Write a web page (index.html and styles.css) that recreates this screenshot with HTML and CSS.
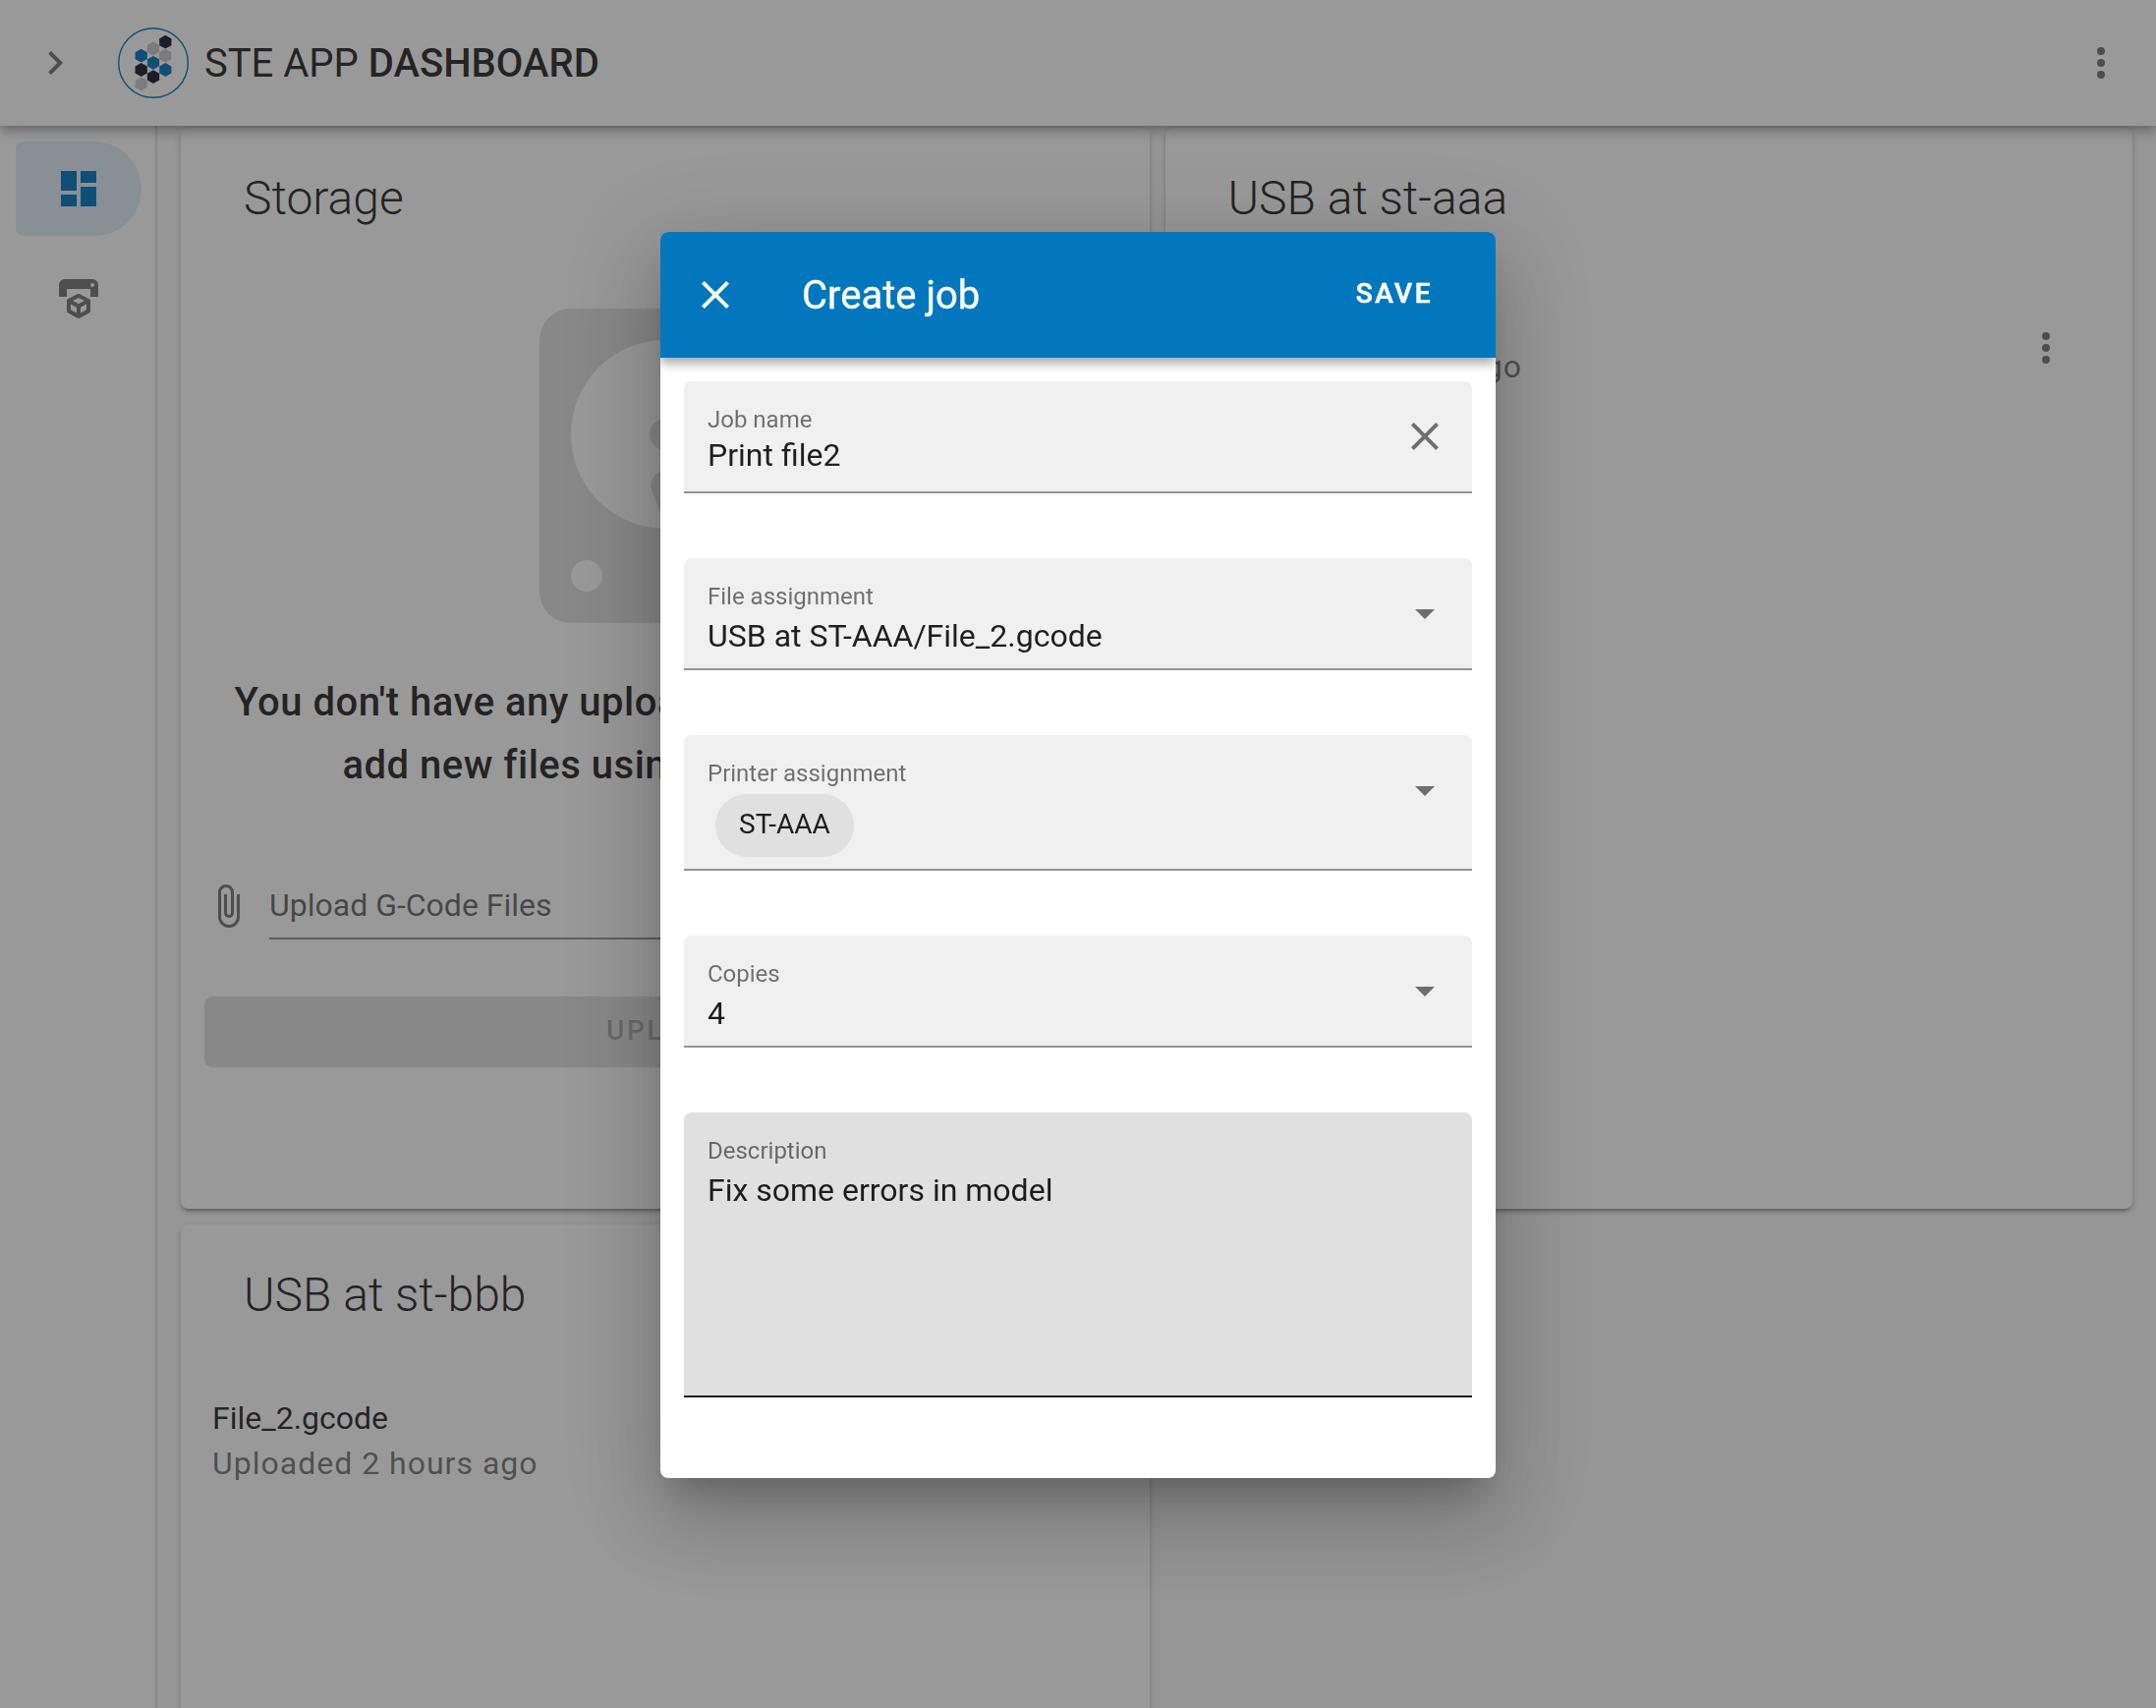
FILE: index.html
```html
<!DOCTYPE html>
<html lang="en">
<head>
<meta charset="utf-8">
<title>STE App Dashboard</title>
<link rel="stylesheet" href="styles.css">
</head>
<body>
<div class="app">
  <header class="app-bar">
    <svg class="icon" viewBox="0 0 24 24"><path d="M8.59,16.58L13.17,12L8.59,7.41L10,6L16,12L10,18L8.59,16.58Z"/></svg>
    <svg class="logo" viewBox="0 0 72 72">
      <defs><path id="hex" d="M0,-6.9L6.1,-3.45V3.45L0,6.9L-6.1,3.45V-3.45Z"/></defs>
      <circle cx="36" cy="36" r="35.3" fill="none" stroke="#0277bd" stroke-width="1.4"/>
      <use href="#hex" x="48.3" y="14.7" fill="#1b1833"/>
      <use href="#hex" x="36" y="21.5" fill="#c8c8c8"/>
      <use href="#hex" x="48.3" y="28.7" fill="#c8c8c8"/>
      <use href="#hex" x="23.7" y="28.7" fill="#0277bd"/>
      <use href="#hex" x="36" y="35.8" fill="#0277bd"/>
      <use href="#hex" x="23.7" y="43" fill="#1b1833"/>
      <use href="#hex" x="48.3" y="43" fill="#0277bd"/>
      <use href="#hex" x="36" y="50.1" fill="#1b1833"/>
      <use href="#hex" x="23.7" y="57.3" fill="#c8c8c8"/>
    </svg>
    <h1 class="app-title">STE APP <b>DASHBOARD</b></h1>
    <svg class="icon app-menu" viewBox="0 0 24 24"><path d="M12,16A2,2 0 0,1 14,18A2,2 0 0,1 12,20A2,2 0 0,1 10,18A2,2 0 0,1 12,16M12,10A2,2 0 0,1 14,12A2,2 0 0,1 12,14A2,2 0 0,1 10,12A2,2 0 0,1 12,10M12,4A2,2 0 0,1 14,6A2,2 0 0,1 12,8A2,2 0 0,1 10,6A2,2 0 0,1 12,4Z"/></svg>
  </header>
  <div class="body">
    <nav class="nav">
      <a class="nav-item active"><svg class="icon" viewBox="0 0 24 24"><path d="M13,3V9H21V3M13,21H21V11H13M3,21H11V15H3M3,13H11V3H3V13Z"/></svg></a>
      <a class="nav-item"><svg class="icon" viewBox="0 0 24 24"><path d="M19,6A1,1 0 0,0 20,5A1,1 0 0,0 19,4A1,1 0 0,0 18,5A1,1 0 0,0 19,6M19,2A3,3 0 0,1 22,5V11H18V7H6V11H2V5A3,3 0 0,1 5,2H19M18,18.25C18,18.63 17.79,18.96 17.47,19.13L12.57,21.82C12.4,21.94 12.21,22 12,22C11.79,22 11.59,21.94 11.43,21.82L6.53,19.13C6.21,18.96 6,18.63 6,18.25V13C6,12.62 6.21,12.29 6.53,12.12L11.43,9.68C11.59,9.56 11.79,9.5 12,9.5C12.21,9.5 12.4,9.56 12.57,9.68L17.47,12.12C17.79,12.29 18,12.62 18,13V18.25M12,11.65L9.04,13L12,14.6L14.96,13L12,11.65M8,17.66L11,19.29V16.33L8,14.71V17.66M16,17.66V14.71L13,16.33V19.29L16,17.66Z"/></svg></a>
    </nav>
    <main class="grid">
      <section class="card">
        <h2 class="card-title">Storage</h2>
        <svg class="disk" viewBox="0 0 24 24"><path d="M6,2H18A2,2 0 0,1 20,4V20A2,2 0 0,1 18,22H6A2,2 0 0,1 4,20V4A2,2 0 0,1 6,2M12,4A6,6 0 0,0 6,10C6,13.31 8.69,16 12.1,16L11.22,13.77C10.95,13.29 11.11,12.68 11.59,12.4L12.45,11.9C12.93,11.63 13.54,11.79 13.82,12.27L15.74,14.69C17.12,13.59 18,11.9 18,10A6,6 0 0,0 12,4M12,9A1,1 0 0,1 13,10A1,1 0 0,1 12,11A1,1 0 0,1 11,10A1,1 0 0,1 12,9M7,18A1,1 0 0,0 6,19A1,1 0 0,0 7,20A1,1 0 0,0 8,19A1,1 0 0,0 7,18M12.09,13.27L14.58,19.58L17.17,18.08L12.95,12.77L12.09,13.27Z"/></svg>
        <p class="empty">You don't have any uploaded files here. You can<br>add new files using the form below.</p>
        <div class="upload">
          <svg class="icon" viewBox="0 0 24 24"><path d="M16.5,6V17.5A4,4 0 0,1 12.5,21.5A4,4 0 0,1 8.5,17.5V5A2.5,2.5 0 0,1 11,2.5A2.5,2.5 0 0,1 13.5,5V15.5A1,1 0 0,1 12.5,16.5A1,1 0 0,1 11.5,15.5V6H10V15.5A2.5,2.5 0 0,0 12.5,18A2.5,2.5 0 0,0 15,15.5V5A4,4 0 0,0 11,1A4,4 0 0,0 7,5V17.5A5.5,5.5 0 0,0 12.5,23A5.5,5.5 0 0,0 18,17.5V6H16.5Z"/></svg>
          <div class="upload-input">Upload G-Code Files</div>
        </div>
        <div class="upload-button">UPLOAD</div>
      </section>
      <section class="card">
        <h2 class="card-title">USB at st-aaa</h2>
        <div class="file">
          <div class="file-text"><div>File_2.gcode</div><div class="file-date">Uploaded 2 hours ago</div></div>
          <svg class="icon" viewBox="0 0 24 24"><path d="M12,16A2,2 0 0,1 14,18A2,2 0 0,1 12,20A2,2 0 0,1 10,18A2,2 0 0,1 12,16M12,10A2,2 0 0,1 14,12A2,2 0 0,1 12,14A2,2 0 0,1 10,12A2,2 0 0,1 12,10M12,4A2,2 0 0,1 14,6A2,2 0 0,1 12,8A2,2 0 0,1 10,6A2,2 0 0,1 12,4Z"/></svg>
        </div>
      </section>
      <section class="card">
        <h2 class="card-title">USB at st-bbb</h2>
        <div class="file">
          <div class="file-text"><div>File_2.gcode</div><div class="file-date">Uploaded 2 hours ago</div></div>
          <svg class="icon" viewBox="0 0 24 24"><path d="M12,16A2,2 0 0,1 14,18A2,2 0 0,1 12,20A2,2 0 0,1 10,18A2,2 0 0,1 12,16M12,10A2,2 0 0,1 14,12A2,2 0 0,1 12,14A2,2 0 0,1 10,12A2,2 0 0,1 12,10M12,4A2,2 0 0,1 14,6A2,2 0 0,1 12,8A2,2 0 0,1 10,6A2,2 0 0,1 12,4Z"/></svg>
        </div>
      </section>
    </main>
  </div>
</div>
<div class="overlay">
  <div class="dialog">
    <div class="dialog-bar">
      <svg class="icon" viewBox="0 0 24 24"><path d="M19,6.41L17.59,5L12,10.59L6.41,5L5,6.41L10.59,12L5,17.59L6.41,19L12,13.41L17.59,19L19,17.59L13.41,12L19,6.41Z"/></svg>
      <h2 class="dialog-title">Create job</h2>
      <div class="save">SAVE</div>
    </div>
    <form class="fields">
      <div class="field">
        <div class="field-text input"><div class="label">Job name</div><div class="value">Print file2</div></div>
        <svg class="icon" viewBox="0 0 24 24"><path d="M19,6.41L17.59,5L12,10.59L6.41,5L5,6.41L10.59,12L5,17.59L6.41,19L12,13.41L17.59,19L19,17.59L13.41,12L19,6.41Z"/></svg>
      </div>
      <div class="field">
        <div class="field-text"><div class="label">File assignment</div><div class="value">USB at ST-AAA/File_2.gcode</div></div>
        <svg class="icon" viewBox="0 0 24 24"><path d="M7,10L12,15L17,10H7Z"/></svg>
      </div>
      <div class="field chips">
        <div class="field-text"><div class="label">Printer assignment</div><div class="chip">ST-AAA</div></div>
        <svg class="icon" viewBox="0 0 24 24"><path d="M7,10L12,15L17,10H7Z"/></svg>
      </div>
      <div class="field">
        <div class="field-text"><div class="label">Copies</div><div class="value">4</div></div>
        <svg class="icon" viewBox="0 0 24 24"><path d="M7,10L12,15L17,10H7Z"/></svg>
      </div>
      <div class="field area">
        <div class="field-text"><div class="label">Description</div><div class="value">Fix some errors in model</div></div>
      </div>
    </form>
  </div>
</div>
</body>
</html>
```

FILE: styles.css
```css
* { box-sizing: border-box; }

body {
  margin: 0;
  height: 100vh;
  overflow: hidden;
  font: 32px/46px Roboto, sans-serif;
  color: rgba(0, 0, 0, .87);
  background: #fafafa;
}

h1, h2, p { margin: 0; }

.icon {
  width: 48px;
  height: 48px;
  flex: none;
  fill: rgba(0, 0, 0, .54);
}

.app {
  display: flex;
  flex-direction: column;
  height: 100vh;
  overflow: hidden;
}

/* top bar */
.app-bar {
  position: relative;
  z-index: 2;
  flex: none;
  display: flex;
  align-items: center;
  height: 128px;
  padding: 0 32px;
  background: #fff;
  box-shadow: 0 4px 8px -2px rgba(0, 0, 0, .2), 0 8px 10px rgba(0, 0, 0, .14), 0 2px 20px rgba(0, 0, 0, .12);
}

.logo {
  width: 72px;
  height: 72px;
  margin-left: 40px;
}

.app-title {
  margin-left: 16px;
  padding-top: 2px;
  font-size: 40px;
  font-weight: 400;
  line-height: 60px;
}

.app-title b { font-weight: 500; }
.app-menu { margin-left: auto; }

.body {
  flex: 1;
  min-height: 0;
  display: flex;
}

/* side navigation */
.nav {
  flex: none;
  width: 160px;
  padding: 16px 14px 0 16px;
  display: flex;
  flex-direction: column;
  gap: 16px;
  background: #fff;
  border-right: 2px solid rgba(0, 0, 0, .12);
}

.nav-item {
  display: flex;
  align-items: center;
  justify-content: center;
  height: 96px;
  border-radius: 8px 48px 48px 8px;
}

.nav-item.active { background: rgba(2, 119, 189, .12); }
.nav-item.active .icon { fill: #0277bd; }

/* storage cards */
.grid {
  display: grid;
  grid-template-columns: 985.5px 984.5px;
  grid-auto-rows: 1100px;
  gap: 16px;
  padding: 2px 24px 0;
}

.card {
  display: flex;
  flex-direction: column;
  padding: 40px 24px 0;
  border-radius: 8px;
  background: #fff;
  box-shadow: 0 6px 2px -4px rgba(0, 0, 0, .2), 0 4px 4px rgba(0, 0, 0, .14), 0 2px 10px rgba(0, 0, 0, .12);
}

.card-title {
  padding-left: 40px;
  font-size: 48px;
  font-weight: 300;
  line-height: 64px;
}

.disk {
  align-self: center;
  width: 384px;
  height: 384px;
  margin-top: 48px;
  fill: #e0e0e0;
}

.empty {
  margin-top: 17px;
  padding-right: 7px;
  font-size: 40px;
  font-weight: 500;
  line-height: 64px;
  letter-spacing: .0125em;
  text-align: center;
  white-space: nowrap;
}

.upload {
  display: flex;
  gap: 18px;
  margin-top: 87px;
  color: rgba(0, 0, 0, .6);
}

.upload-input {
  flex: 1;
  height: 58px;
  border-bottom: 2px solid rgba(0, 0, 0, .42);
}

.upload-button {
  height: 72px;
  margin-top: 58px;
  padding-left: 2px;
  border-radius: 8px;
  background: rgba(0, 0, 0, .12);
  color: rgba(0, 0, 0, .26);
  font-size: 28px;
  font-weight: 500;
  line-height: 70px;
  letter-spacing: .0893em;
  text-align: center;
}

.file {
  display: flex;
  align-items: center;
  justify-content: space-between;
  margin-top: 70px;
  padding: 0 40px 0 8px;
}

.file .icon { margin-top: 8px; }

.file-date {
  color: rgba(0, 0, 0, .54);
  letter-spacing: .03125em;
}

/* dialog */
.overlay {
  position: fixed;
  inset: 0;
  z-index: 5;
  display: flex;
  align-items: center;
  justify-content: center;
  background: rgba(33, 33, 33, .46);
}

.dialog {
  width: 850px;
  height: 1268px;
  margin-top: 2px;
  border-radius: 8px;
  background: #fff;
  box-shadow: 0 22px 30px -14px rgba(0, 0, 0, .2), 0 48px 76px 6px rgba(0, 0, 0, .14), 0 18px 92px 16px rgba(0, 0, 0, .12);
}

.dialog-bar {
  display: flex;
  align-items: center;
  height: 128px;
  padding: 0 64px 0 32px;
  border-radius: 8px 8px 0 0;
  background: #0277bd;
  color: #fff;
  box-shadow: 0 4px 8px -2px rgba(0, 0, 0, .2), 0 8px 10px rgba(0, 0, 0, .14), 0 2px 20px rgba(0, 0, 0, .12);
  clip-path: inset(0 0 -40px 0);
}

.dialog-bar .icon { fill: #fff; }

.dialog-title {
  margin-left: 64px;
  padding-top: 2px;
  font-size: 40px;
  font-weight: 400;
  line-height: 60px;
  -webkit-text-stroke: .4px #fff;
}

.save {
  margin: 0 0 3px auto;
  font-size: 28px;
  font-weight: 500;
  letter-spacing: .0893em;
  -webkit-text-stroke: .6px #fff;
}

.fields {
  display: flex;
  flex-direction: column;
  gap: 66px;
  padding: 24px;
}

.field {
  display: flex;
  justify-content: space-between;
  align-items: flex-start;
  height: 114px;
  padding: 25px 24px 0;
  border-radius: 8px 8px 0 0;
  border-bottom: 2px solid #949494;
  background: #f0f0f0;
}

.field .icon { margin-top: 7px; }

.label {
  font-size: 24px;
  line-height: 28px;
  color: rgba(0, 0, 0, .54);
}

.value {
  margin-top: 6px;
  line-height: 40px;
}

.input .value { margin-top: 2px; }
.chips { height: 138px; }

.chip {
  width: max-content;
  height: 64px;
  margin: 7px 0 0 8px;
  padding: 0 24px;
  border-radius: 32px;
  background: #e0e0e0;
  font-size: 28px;
  line-height: 62px;
}

.area {
  height: 290px;
  background: #e0e0e0;
  border-bottom-color: #212121;
}
```
